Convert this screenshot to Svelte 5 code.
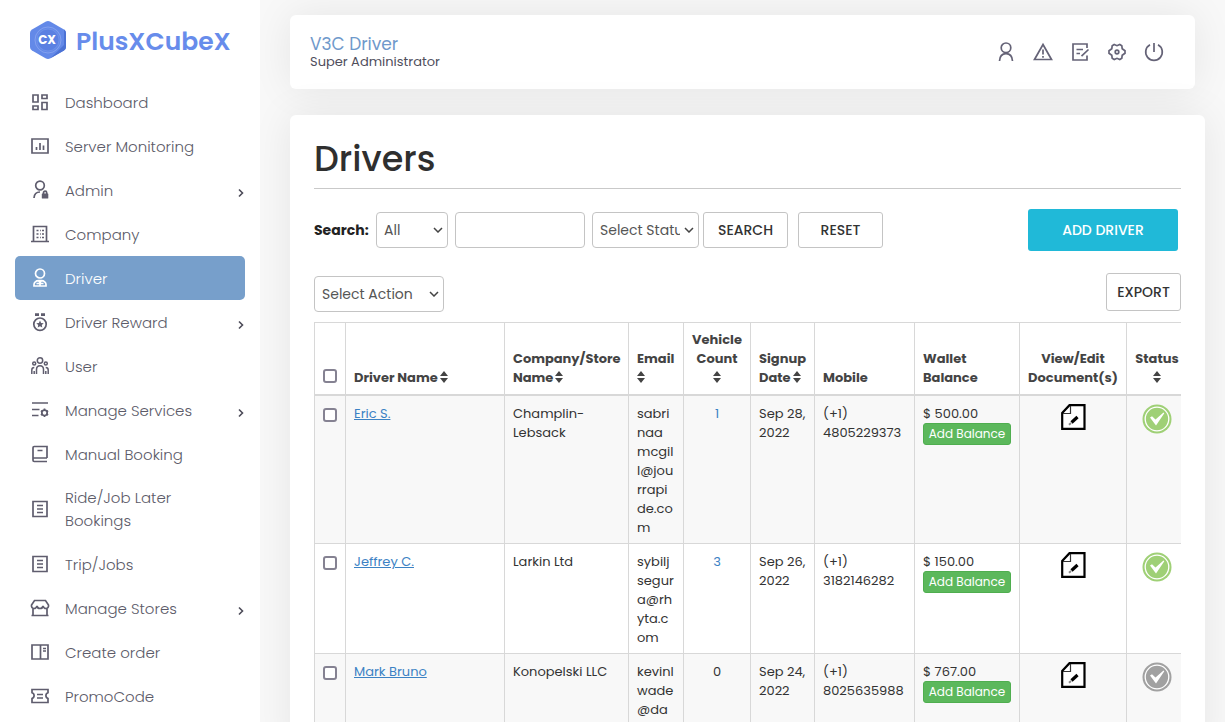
<script>
  const menu = [
    { label: 'Dashboard', icon: 'dashboard' },
    { label: 'Server Monitoring', icon: 'chart' },
    { label: 'Admin', icon: 'admin', more: true },
    { label: 'Company', icon: 'company' },
    { label: 'Driver', icon: 'driver', active: true },
    { label: 'Driver Reward', icon: 'reward', more: true },
    { label: 'User', icon: 'users' },
    { label: 'Manage Services', icon: 'services', more: true },
    { label: 'Manual Booking', icon: 'book' },
    { label: 'Ride/Job Later Bookings', icon: 'list' },
    { label: 'Trip/Jobs', icon: 'list' },
    { label: 'Manage Stores', icon: 'store', more: true },
    { label: 'Create order', icon: 'order' },
    { label: 'PromoCode', icon: 'promo' }
  ];

  const columns = [
    { lines: ['Driver Name'], sort: true, width: 159 },
    { lines: ['Company/Store', 'Name'], sort: true, width: 124 },
    { lines: ['Email', ''], sort: true, width: 55 },
    { lines: ['Vehicle', 'Count', ''], sort: true, center: true, width: 67 },
    { lines: ['Signup', 'Date'], sort: true, width: 64 },
    { lines: ['Mobile'], width: 100 },
    { lines: ['Wallet', 'Balance'], width: 105 },
    { lines: ['View/Edit', 'Document(s)'], center: true, width: 107 },
    { lines: ['Status', ''], sort: true, center: true, width: 61 }
  ];

  const drivers = [
    { name: 'Eric S.', company: ['Champlin-', 'Lebsack'], email: ['sabri', 'naa', 'mcgil', 'l@jou', 'rrapi', 'de.co', 'm'], vehicles: 1, date: ['Sep 28,', '2022'], mobile: ['(+1)', '4805229373'], balance: '$ 500.00', active: true },
    { name: 'Jeffrey C.', company: ['Larkin Ltd'], email: ['sybilj', 'segur', 'a@rh', 'yta.c', 'om'], vehicles: 3, date: ['Sep 26,', '2022'], mobile: ['(+1)', '3182146282'], balance: '$ 150.00', active: true },
    { name: 'Mark Bruno', company: ['Konopelski LLC'], email: ['kevinl', 'wade', '@da'], vehicles: 0, date: ['Sep 24,', '2022'], mobile: ['(+1)', '8025635988'], balance: '$ 767.00', active: false }
  ];
</script>

{#snippet stack(lines)}
  {#each lines as line, i}{#if i > 0}<br />{/if}{line}{/each}
{/snippet}

{#snippet menuIcon(name)}
  <svg class="icon" viewBox="0 0 20 20" aria-hidden="true">
    {#if name === 'dashboard'}
      <path d="M3 3h5v7H3zM12 3h5v3.500h-5zM3 14h5v3.500H3zM12 10.500h5v7h-5z" />
    {:else if name === 'chart'}
      <path d="M2 3h16v14H2zM6.500 14v-3M10 14V7M13.500 14V9.500" />
    {:else if name === 'admin'}
      <circle cx="10" cy="5.500" r="4.300" /><path d="M4 18c.2-3.800 2.200-6 6-6M13.500 14v-1.200a1.600 1.600 0 0 1 3.200 0V14" /><rect class="fill" x="11.800" y="13.500" width="6.500" height="5" rx=".6" />
    {:else if name === 'company'}
      <path d="M1 17.500h18M3.500 17.500V2.500h13v15" /><path d="M6.500 6.500h2m1.500 0h.8m1.200 0h2M6.500 10h2m1.500 0h.8m1.200 0h2M6.500 13.500h2m1.500 0h.8m1.200 0h2" />
    {:else if name === 'driver'}
      <circle cx="10" cy="5.500" r="4.500" /><path d="M4 18h12v-1.500c0-2-2-3.800-4.500-3.800h-3C6 12.700 4 14.500 4 16.500zM6.500 15.500h7M10 15.500V18M8.500 12.500l1.500 2 1.500-2" />
    {:else if name === 'reward'}
      <circle cx="10" cy="12.200" r="6.200" /><path class="fill" d="M5 1.200h4v2.800H5zM11 1.200h4v2.800h-4zM10 8.500l1.100 2.400 2.600.3-1.900 1.800.5 2.600-2.300-1.300-2.300 1.300.5-2.600-1.900-1.800 2.600-.3z" />
    {:else if name === 'users'}
      <g stroke-width="1.500"><circle cx="10" cy="4.500" r="2.700" /><circle cx="4.200" cy="7.500" r="1.500" /><circle cx="15.800" cy="7.500" r="1.500" /><path d="M6.500 18v-4.500c0-5 7-5 7 0V18M1.800 18v-4c0-1.700 1-2.500 2.500-2.500M18.200 18v-4c0-1.700-1-2.500-2.500-2.500M4.200 15v3M15.800 15v3" /></g>
    {:else if name === 'services'}
      <path d="M2 3h16M2 9.500h7.500M2 15.500h6.500" /><circle cx="14.500" cy="12.800" r="2.700" /><path d="M14.500 8.600v2M14.500 15v2M10.900 10.700l1.700 1M16.400 13.900l1.700 1M10.900 14.900l1.700-1M16.400 11.700l1.700-1" />
    {:else if name === 'book'}
      <path d="M17 14V2.500H4.200C3.400 2.500 3 3 3 3.700v12.500c0 .8.500 1.300 1.200 1.300H17M3 14h14M7.500 6.500h5" />
    {:else if name === 'list'}
      <path d="M3 2.500h14v15H3zM7 6.500h6M7 10h6M7 13.500h6" />
    {:else if name === 'store'}
      <path d="M4.500 2.500h11L18.500 7c.3 2-.8 3.500-2.500 3.500S13.500 9.500 13 8c-.3 1.700-1.500 2.500-3 2.500S7.300 9.700 7 8c-.5 1.500-1.300 2.500-3 2.500S1.200 9 1.500 7zM3 11v6.500h14V11M1.500 17.500h17" />
    {:else if name === 'order'}
      <path d="M2 3h16v14H2zM10.500 3v14M13 6.500h3M13 9h3" />
    {:else}
      <path d="M2 3.500h16v3.200c-2.800.8-2.800 5 0 5.800v4H2v-4c2.800-.8 2.800-5 0-5.800zM7 8.500h6M7 12h6" />
    {/if}
  </svg>
{/snippet}

{#snippet sortIcon(alone)}
  <svg class="sort" class:alone viewBox="0 0 8 12" aria-hidden="true"><path d="M4 0l4 5H0zM4 12l4-5H0z" /></svg>
{/snippet}

<div class="shell">
  <aside>
    <a class="brand" href="#home">
      <svg viewBox="0 0 36 38" aria-hidden="true">
        <path d="M15.500.7Q18-.7 20.500.7L34 8.500Q36 9.700 36 12v14q0 2.300-2 3.500l-13.500 7.800Q18 38.700 15.500 37.300L2 29.500Q0 28.300 0 26V12Q0 9.700 2 8.500z" fill="#6389e8" />
        <path d="M34 8.500Q36 9.700 36 12v14q0 2.300-2 3.500l-13.500 7.800L34 24z" fill="#4c72d4" />
        <circle cx="18" cy="19" r="13" fill="none" stroke="#91aaf0" stroke-width=".7" />
        <circle cx="18" cy="19" r="11" fill="#5b80e2" stroke="#809eed" stroke-width=".5" />
        <text x="17" y="23" text-anchor="middle">CX</text>
      </svg>
      <span>PlusXCubeX</span>
    </a>
    <nav>
      {#each menu as item}
        <a class="item" class:active={item.active} href="#menu">
          {@render menuIcon(item.icon)}
          <span>{item.label}</span>
          {#if item.more}
            <svg class="more" viewBox="0 0 6 10" aria-hidden="true"><path d="M1 1.500L4.500 5 1 8.500" /></svg>
          {/if}
        </a>
      {/each}
    </nav>
  </aside>

  <main>
    <header>
      <div>
        <div class="user">V3C Driver</div>
        <div class="role">Super Administrator</div>
      </div>
      <div class="tools">
        <button aria-label="Profile"><svg class="icon" viewBox="0 0 20 20"><circle cx="10" cy="5.800" r="4.800" /><path d="M3.500 19c.3-5 3-7.300 6.500-7.300s6.200 2.300 6.500 7.300" /></svg></button>
        <button aria-label="Alerts"><svg class="icon" viewBox="0 0 20 20"><path d="M10 2.500L18.500 17.500h-17zM10 7.500v5M10 14v1.800" /></svg></button>
        <button aria-label="Notes"><svg class="icon" viewBox="0 0 20 20"><path d="M17 6V2H3v16h14v-4.500M6.500 7.500H13M6.500 11.500H10M11.500 14.200L18.500 7.500" /></svg></button>
        <button aria-label="Settings"><svg class="icon" viewBox="0 0 20 20"><path d="M7.200 2.500l2.800 1.200 2.800-1.200 2 1.200.4 3 2.800 2v2.600l-2.800 2-.4 3-2 1.200-2.800-1.200-2.800 1.200-2-1.200-.4-3-2.800-2V8.700l2.800-2 .4-3z" /><circle cx="10" cy="10" r="1.800" /></svg></button>
        <button aria-label="Log out"><svg class="icon" viewBox="0 0 20 20"><path d="M10 1v9M6 2.800a8.300 8.300 0 1 0 8 0" /></svg></button>
      </div>
    </header>

    <section>
      <h1>Drivers</h1>
      <form class="search" onsubmit={(e) => e.preventDefault()}>
        <label for="field">Search:</label>
        <select id="field" class="field"><option>All</option></select>
        <input class="keyword" type="text" aria-label="Keyword" />
        <select class="status" aria-label="Status"><option>Select Status</option></select>
        <button class="plain">SEARCH</button>
        <button class="plain reset" type="reset">RESET</button>
        <button class="add" type="button">ADD DRIVER</button>
      </form>
      <div class="actions">
        <select aria-label="Action"><option>Select Action</option></select>
        <button class="export">EXPORT</button>
      </div>
      <div class="scroll">
        <table>
          <colgroup>
            <col style="width: 31px" />
            {#each columns as c}<col style="width: {c.width}px" />{/each}
          </colgroup>
          <thead>
            <tr>
              <th class="check"><input type="checkbox" aria-label="Select all" /></th>
              {#each columns as c}
                <th class:center={c.center}>{@render stack(c.lines)}{#if c.sort}{@render sortIcon(c.lines.at(-1) === '')}{/if}</th>
              {/each}
            </tr>
          </thead>
          <tbody>
            {#each drivers as d}
              <tr>
                <td class="check"><input type="checkbox" aria-label={d.name} /></td>
                <td><a class="name" href="#driver">{d.name}</a></td>
                <td>{@render stack(d.company)}</td>
                <td class="nowrap">{@render stack(d.email)}</td>
                <td class="center">{#if d.vehicles}<a href="#vehicles">{d.vehicles}</a>{:else}0{/if}</td>
                <td>{@render stack(d.date)}</td>
                <td class="nowrap">{@render stack(d.mobile)}</td>
                <td class="nowrap">{d.balance}<button class="balance">Add Balance</button></td>
                <td class="center">
                  <a class="doc" href="#documents" aria-label="Documents">
                    <svg viewBox="0 0 25 26">
                      <path d="M8.500 1.200H23.500v23.600H1.200V9z" fill="#fff" stroke="#000" stroke-width="2.200" />
                      <path d="M9.500 2v7.500H2" fill="none" stroke="#333" stroke-width="1.200" />
                      <path d="M10.500 18.500l6-5.500" stroke="#000" stroke-width="3.200" />
                      <path d="M8 20.800l2-1.800" stroke="#888" stroke-width="2" />
                    </svg>
                  </a>
                </td>
                <td class="center">
                  <svg class="badge" class:on={d.active} viewBox="0 0 30 30" role="img" aria-label="Status">
                    <circle cx="15" cy="15" r="14.500" />
                    <circle class="ring" cx="15" cy="15" r="11.800" />
                    <path d="M8 13.500l2-1.200 3.500 3.200L21.500 8.500l.8.700L14 21.500z" />
                  </svg>
                </td>
              </tr>
            {/each}
          </tbody>
        </table>
      </div>
    </section>
  </main>
</div>

<style>
  :global(body) { margin: 0; background: #f8f8f8; }
  .shell, .shell :global(*) { box-sizing: border-box; }
  .shell { display: flex; height: 100vh; overflow: hidden; font: 13px/19px Poppins, Inter, sans-serif; color: #333; }
  button, input, select { font: inherit; color: inherit; margin: 0; }
  a { color: #337ab7; text-decoration: none; }

  aside { flex: 0 0 260px; background: #fff; padding: 0 15px; overflow: hidden; }
  .brand { display: flex; align-items: center; gap: 10px; height: 80px; padding-left: 15px; font-size: 25px; font-weight: 600; color: #678ceb; }
  .brand svg { width: 36px; height: 38px; }
  .brand span { padding-top: 3px; }
  .brand text { font-size: 12px; font-weight: 700; fill: #fff; }
  .item { display: flex; align-items: center; gap: 15px; min-height: 44px; padding: 10px 15px; border-radius: 5px; font-size: 15px; line-height: 23px; font-weight: 300; color: #5c5b69; }
  .item span { flex: 1; max-width: 140px; }
  .icon { flex: none; width: 20px; height: 20px; fill: none; stroke: #5f5d6e; stroke-width: 1.7; }
  .icon .fill { fill: #5f5d6e; stroke: none; }
  .item.active { background: #779fcb; color: #fff; }
  .active .icon { stroke: #fff; }
  .more { width: 6px; height: 10px; margin: 6px -14px 0 auto; fill: none; stroke: #4c4b58; stroke-width: 1.6; }

  main { flex: 1; min-width: 0; padding: 15px 20px 30px 30px; overflow: auto; scrollbar-width: none; }
  header, section { background: #fff; border-radius: 6px; box-shadow: 0 0 40px rgba(0, 0, 0, .08); }
  header { display: flex; align-items: center; justify-content: space-between; height: 74px; margin: 0 10px 26px 0; padding: 0 30px 0 20px; }
  .user { font-size: 17px; color: #6f99cb; }
  .role { line-height: 16px; color: #4f4e5c; }
  .tools { display: flex; gap: 15px; }
  .tools button { display: flex; padding: 1px; border: 0; background: none; }
  .tools .icon { stroke: #656377; }

  section { padding: 24px 24px 30px; }
  h1 { margin: 0 0 20px; padding-bottom: 9px; border-bottom: 1px solid #c9c9c9; font-size: 35px; line-height: 40px; font-weight: 500; color: #2f2f2f; }
  select, .keyword { height: 36px; padding: 0 7px; border: 1px solid #c4c4c4; border-radius: 4px; background: #fff; font-size: 14px; color: #555; }
  select { appearance: none; padding-right: 18px; background: #fff url("data:image/svg+xml,%3Csvg xmlns='http://www.w3.org/2000/svg' width='10' height='6'%3E%3Cpath d='M1 1l4 4 4-4' fill='none' stroke='%23444' stroke-width='1.5'/%3E%3C/svg%3E") no-repeat right 4px center; }
  .search { display: flex; align-items: center; }
  .search label { width: 62px; font-size: 14px; font-weight: 700; color: #222; }
  .field { width: 72px; }
  .keyword { width: 130px; margin: 0 7px; }
  .status { width: 107px; margin-right: 4px; }
  .plain, .export { border: 1px solid #c4c4c4; border-radius: 3px; background: #fff; font-size: 14px; font-weight: 500; color: #333; padding: 0; }
  .plain { width: 85px; height: 36px; }
  .reset { margin-left: 10px; }
  .add { width: 150px; height: 42px; margin: 0 3px 0 auto; border: 0; border-radius: 3px; background: #20b9d8; font-size: 14px; font-weight: 500; color: #fff; }
  .actions { display: flex; justify-content: space-between; align-items: flex-start; margin: 22px 0 10px; }
  .actions select { width: 130px; margin-top: 3px; }
  .export { width: 75px; height: 38px; }

  .scroll { overflow-x: auto; scrollbar-width: none; }
  table { width: 100%; min-width: 873px; table-layout: fixed; border-collapse: collapse; }
  th, td { padding: 7px 8px; border: 1px solid #d8d8d8; text-align: left; vertical-align: top; }
  td { padding: 8px 8px 6px; }
  th { vertical-align: bottom; border-bottom-width: 2px; font-weight: 700; color: #444; white-space: nowrap; }
  tbody tr:nth-child(odd) { background: #f8f8f8; }
  th.center, td.center { text-align: center; }
  .nowrap { white-space: nowrap; }
  .check input { display: block; appearance: none; width: 14px; height: 14px; margin: 4px 0; border: 2px solid #858292; border-radius: 3px; background: #fff; }
  .sort { width: 8px; height: 12px; margin-left: 2px; vertical-align: -1px; fill: #444; }
  .sort.alone { margin-left: 0; }
  .name { text-decoration: underline; }
  td a { color: #3c82c4; }
  .balance { display: block; width: 88px; height: 22px; padding: 0; border: 1px solid #4fae4f; border-radius: 3px; background: #5cb85c; color: #fff; font-size: 12px; line-height: 18px; }
  .doc { display: block; }
  .doc svg { display: block; width: 25px; height: 26px; margin: 0 auto; }
  .badge { display: block; width: 30px; height: 30px; margin: 0 auto; fill: #a1a1a1; }
  .badge.on { fill: #9fd076; }
  .badge .ring { fill: none; stroke: #fff; stroke-width: 1.300; }
  .badge path { fill: #fff; }
</style>
